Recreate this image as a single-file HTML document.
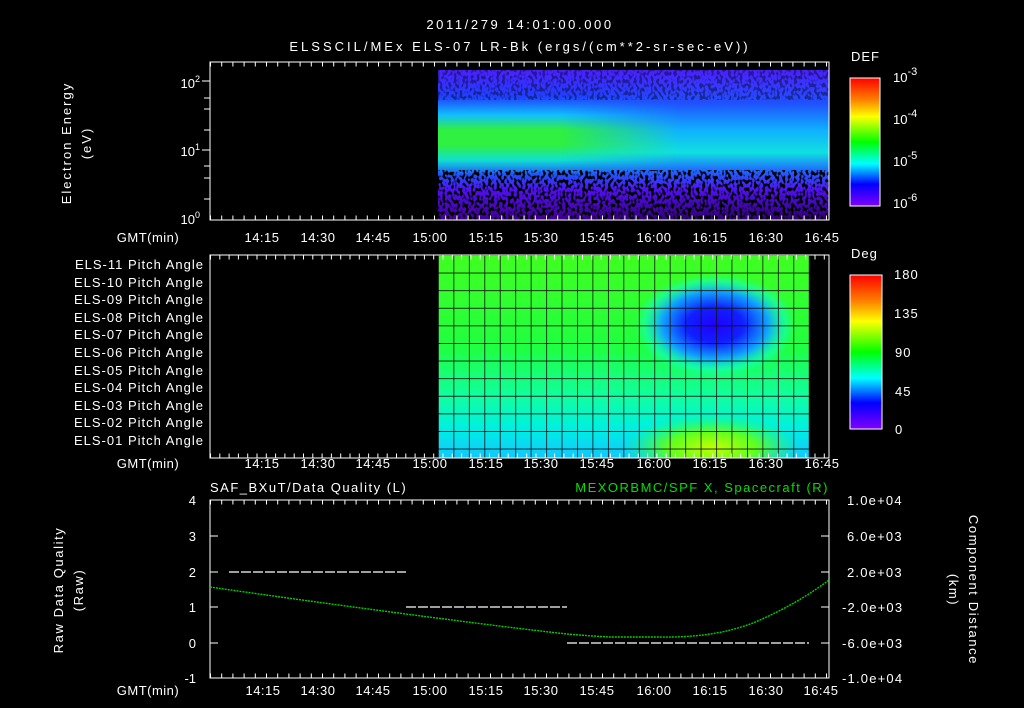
<!DOCTYPE html>
<html><head><meta charset="utf-8"><style>
html,body{margin:0;padding:0;background:#000;}
svg{display:block}
text{font-family:"Liberation Sans",sans-serif;fill:#fff;font-size:13px}
</style></head><body>
<svg width="1024" height="708" viewBox="0 0 1024 708" xmlns="http://www.w3.org/2000/svg">
<defs>
<linearGradient id="specL" x1="0" y1="70" x2="0" y2="220" gradientUnits="userSpaceOnUse">
<stop offset="0" stop-color="#4a20ff"/><stop offset="0.18" stop-color="#2040ff"/>
<stop offset="0.3" stop-color="#10c0ff"/><stop offset="0.4" stop-color="#30f040"/>
<stop offset="0.5" stop-color="#30f040"/><stop offset="0.6" stop-color="#10e0d0"/>
<stop offset="0.7" stop-color="#2050ff"/><stop offset="0.8" stop-color="#5010f0"/>
<stop offset="1" stop-color="#400090"/></linearGradient>
<linearGradient id="specR" x1="0" y1="70" x2="0" y2="220" gradientUnits="userSpaceOnUse">
<stop offset="0" stop-color="#4a20ff"/><stop offset="0.22" stop-color="#2050ff"/>
<stop offset="0.4" stop-color="#10b0ff"/><stop offset="0.55" stop-color="#10e0e0"/>
<stop offset="0.68" stop-color="#2060ff"/><stop offset="0.8" stop-color="#5010f0"/>
<stop offset="1" stop-color="#300070"/></linearGradient>
<linearGradient id="hm" x1="560" y1="0" x2="680" y2="0" gradientUnits="userSpaceOnUse">
<stop offset="0" stop-color="#fff" stop-opacity="0"/><stop offset="1" stop-color="#fff" stop-opacity="1"/></linearGradient>
<mask id="rmask"><rect x="438" y="60" width="400" height="170" fill="url(#hm)"/></mask>
<linearGradient id="rb" x1="0" y1="0" x2="0" y2="1">
<stop offset="0" stop-color="#ff0000"/><stop offset="0.17" stop-color="#ff8000"/>
<stop offset="0.3" stop-color="#ffff00"/><stop offset="0.5" stop-color="#00ff00"/>
<stop offset="0.67" stop-color="#00ffff"/><stop offset="0.83" stop-color="#0000ff"/>
<stop offset="1" stop-color="#8000ff"/></linearGradient>
<linearGradient id="pa" x1="0" y1="255" x2="0" y2="458" gradientUnits="userSpaceOnUse">
<stop offset="0" stop-color="#40ff20"/><stop offset="0.45" stop-color="#20ff40"/>
<stop offset="0.7" stop-color="#10ffa0"/><stop offset="0.85" stop-color="#00f0e0"/>
<stop offset="1" stop-color="#10c8ff"/></linearGradient>
<radialGradient id="blue" cx="715" cy="325" r="60" gradientUnits="userSpaceOnUse" gradientTransform="translate(715 325) scale(1.35 0.85) translate(-715 -325)">
<stop offset="0" stop-color="#2000ff"/><stop offset="0.35" stop-color="#1020ff"/>
<stop offset="0.65" stop-color="#10a0ff"/><stop offset="0.88" stop-color="#10ffd0" stop-opacity="0.5"/>
<stop offset="1" stop-color="#10ffd0" stop-opacity="0"/></radialGradient>
<radialGradient id="yel" cx="712" cy="448" r="55" gradientUnits="userSpaceOnUse" gradientTransform="translate(712 448) scale(1.6 0.6) translate(-712 -448)">
<stop offset="0" stop-color="#c0ff00"/><stop offset="0.5" stop-color="#60ff20"/>
<stop offset="1" stop-color="#20ff60" stop-opacity="0"/></radialGradient>
<filter id="spk" x="0" y="0" width="100%" height="100%">
<feTurbulence type="fractalNoise" baseFrequency="0.35 0.25" numOctaves="1" seed="3"/>
<feColorMatrix type="matrix" values="0 0 0 0 0  0 0 0 0 0  0 0 0 0 0  -9 0 0 0 4.6"/>
</filter>
<pattern id="grid" x="438" y="255" width="15.45" height="17.6" patternUnits="userSpaceOnUse">
<path d="M0 0V17.6M0 0H15.45" stroke="#111" stroke-width="1.6" fill="none"/></pattern>
</defs>

<text x="520" y="29" text-anchor="middle" font-size="16" letter-spacing="2.6">2011/279 14:01:00.000</text>
<text x="520" y="51" text-anchor="middle" font-size="17" letter-spacing="3">ELSSCIL/MEx ELS-07 LR-Bk  (ergs/(cm**2-sr-sec-eV))</text>

<!-- top spectrogram -->
<rect x="438" y="70" width="391" height="150" fill="url(#specL)"/>
<rect x="438" y="70" width="391" height="150" fill="url(#specR)" mask="url(#rmask)"/>
<rect x="438" y="170" width="391" height="50" fill="#000" filter="url(#spk)"/>
<rect x="438" y="70" width="391" height="30" fill="#000" filter="url(#spk)" opacity="0.4"/>
<rect x="210" y="62" width="619" height="158" stroke="#fff" fill="none"/>
<path d="M210 62H829" stroke="#fff" stroke-dasharray="1 10.2" stroke-width="5" fill="none" transform="translate(0 2)"/>
<path d="M210 220H829" stroke="#fff" stroke-dasharray="1 10.2" stroke-width="5" fill="none" transform="translate(0 -2)"/>
<path d="M202 81H210M204 98H210M204 109H210M204 130H210M202 150H210M204 166H210M204 178H210M204 199H210" stroke="#fff"/>
<text x="200" y="88" text-anchor="end" font-size="14">10<tspan font-size="9" dy="-6">2</tspan></text>
<text x="200" y="156" text-anchor="end" font-size="14">10<tspan font-size="9" dy="-6">1</tspan></text>
<text x="200" y="224" text-anchor="end" font-size="14">10<tspan font-size="9" dy="-6">0</tspan></text>
<text transform="translate(71 143) rotate(-90)" text-anchor="middle" font-size="14" letter-spacing="2">Electron Energy</text>
<text transform="translate(91 143) rotate(-90)" text-anchor="middle" font-size="14" letter-spacing="2">(eV)</text>
<g font-size="13" text-anchor="middle" letter-spacing="0.5">
<text x="148" y="242">GMT(min)</text>
<text x="262" y="242">14:15</text><text x="318" y="242">14:30</text><text x="373" y="242">14:45</text>
<text x="430" y="242">15:00</text><text x="486" y="242">15:15</text><text x="541" y="242">15:30</text>
<text x="597" y="242">15:45</text><text x="654" y="242">16:00</text><text x="710" y="242">16:15</text>
<text x="766" y="242">16:30</text><text x="822" y="242">16:45</text>
</g>
<text x="851" y="61" font-size="16" letter-spacing="1">DEF</text>
<rect x="850" y="78" width="30" height="128" fill="url(#rb)" stroke="#fff"/>
<g font-size="16"><text x="893" y="82">10<tspan font-size="11" dy="-7">-3</tspan></text>
<text x="893" y="124">10<tspan font-size="11" dy="-7">-4</tspan></text>
<text x="893" y="166">10<tspan font-size="11" dy="-7">-5</tspan></text>
<text x="893" y="208">10<tspan font-size="11" dy="-7">-6</tspan></text></g>

<!-- pitch angle -->
<rect x="438" y="255" width="371" height="203" fill="url(#pa)"/>
<rect x="600" y="255" width="209" height="203" fill="url(#blue)"/>
<rect x="620" y="410" width="189" height="48" fill="url(#yel)"/>
<rect x="438" y="255" width="371" height="203" fill="url(#grid)"/>
<rect x="210" y="255" width="619" height="203" stroke="#fff" fill="none"/>
<path d="M210 255H829" stroke="#fff" stroke-dasharray="1 8.3" stroke-width="5" fill="none" transform="translate(0 2)"/>
<path d="M210 458H829" stroke="#fff" stroke-dasharray="1 8.3" stroke-width="5" fill="none" transform="translate(0 -2)"/>
<g font-size="12.5" text-anchor="end" letter-spacing="1">
<text x="204" y="269">ELS-11 Pitch Angle</text><text x="204" y="287">ELS-10 Pitch Angle</text>
<text x="204" y="304">ELS-09 Pitch Angle</text><text x="204" y="322">ELS-08 Pitch Angle</text>
<text x="204" y="339">ELS-07 Pitch Angle</text><text x="204" y="357">ELS-06 Pitch Angle</text>
<text x="204" y="375">ELS-05 Pitch Angle</text><text x="204" y="392">ELS-04 Pitch Angle</text>
<text x="204" y="410">ELS-03 Pitch Angle</text><text x="204" y="427">ELS-02 Pitch Angle</text>
<text x="204" y="445">ELS-01 Pitch Angle</text></g>
<g font-size="13" text-anchor="middle" letter-spacing="0.5">
<text x="148" y="468">GMT(min)</text>
<text x="262" y="468">14:15</text><text x="318" y="468">14:30</text><text x="373" y="468">14:45</text>
<text x="430" y="468">15:00</text><text x="486" y="468">15:15</text><text x="541" y="468">15:30</text>
<text x="597" y="468">15:45</text><text x="654" y="468">16:00</text><text x="710" y="468">16:15</text>
<text x="766" y="468">16:30</text><text x="822" y="468">16:45</text>
</g>
<text x="851" y="258" font-size="16" letter-spacing="1">Deg</text>
<rect x="850" y="275" width="32" height="154" fill="url(#rb)" stroke="#fff"/>
<g font-size="16" letter-spacing="1"><text x="894" y="279">180</text><text x="894" y="318">135</text>
<text x="895" y="357">90</text><text x="895" y="396">45</text><text x="895" y="434">0</text></g>

<!-- bottom -->
<text x="210" y="492" font-size="15" letter-spacing="1.5">SAF_BXuT/Data Quality (L)</text>
<text x="829" y="492" font-size="15" text-anchor="end" letter-spacing="1.5" style="fill:#00e000">MEXORBMC/SPF X, Spacecraft (R)</text>
<rect x="210" y="500" width="619" height="178" stroke="#fff" fill="none"/>
<path d="M210 500H829" stroke="#fff" stroke-dasharray="1 10.2" stroke-width="5" fill="none" transform="translate(0 2)"/>
<path d="M210 678H829" stroke="#fff" stroke-dasharray="1 10.2" stroke-width="5" fill="none" transform="translate(0 -2)"/>
<path d="M210 500H218M210 536H218M210 572H218M210 607H218M210 643H218M821 500H829M821 536H829M821 572H829M821 607H829M821 643H829" stroke="#fff"/>
<g font-size="14" text-anchor="end"><text x="196" y="505">4</text><text x="196" y="541">3</text>
<text x="196" y="577">2</text><text x="196" y="612">1</text><text x="196" y="648">0</text><text x="196" y="683">-1</text></g>
<g font-size="13" letter-spacing="1.2"><text x="847" y="505">1.0e+04</text><text x="847" y="541">6.0e+03</text>
<text x="847" y="577">2.0e+03</text><text x="842" y="612">-2.0e+03</text><text x="842" y="648">-6.0e+03</text><text x="842" y="683">-1.0e+04</text></g>
<text transform="translate(63 590) rotate(-90)" text-anchor="middle" font-size="14" letter-spacing="1.6">Raw Data Quality</text>
<text transform="translate(83 590) rotate(-90)" text-anchor="middle" font-size="14" letter-spacing="1.6">(Raw)</text>
<text transform="translate(969 590) rotate(90)" text-anchor="middle" font-size="14" letter-spacing="1.6">Component Distance</text>
<text transform="translate(949 590) rotate(90)" text-anchor="middle" font-size="14" letter-spacing="1.6">(km)</text>
<path d="M229 572H406M406 607H567M567 643H809" stroke="#fff" stroke-width="1.3" stroke-dasharray="10 2" fill="none"/>
<path d="M210 587Q300 600 406 614T567 634Q590 636 610 637H660Q720 638 760 620T829 580" stroke="#00d000" stroke-width="1.4" stroke-dasharray="2 1" fill="none"/>
<g font-size="13" text-anchor="middle" letter-spacing="0.5">
<text x="148" y="695">GMT(min)</text>
<text x="263" y="695">14:15</text><text x="318" y="695">14:30</text><text x="373" y="695">14:45</text>
<text x="430" y="695">15:00</text><text x="486" y="695">15:15</text><text x="541" y="695">15:30</text>
<text x="597" y="695">15:45</text><text x="654" y="695">16:00</text><text x="710" y="695">16:15</text>
<text x="766" y="695">16:30</text><text x="821" y="695">16:45</text>
</g>
</svg>
</body></html>
